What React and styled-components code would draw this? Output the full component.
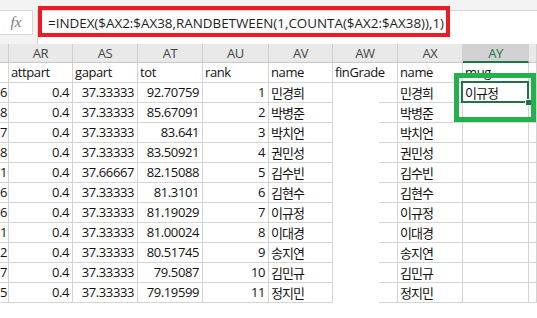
import React from "react"
import styled, { createGlobalStyle } from "styled-components"

const GlobalStyle = createGlobalStyle`
  html, body {
    margin: 0;
    padding: 0;
    background: #fff;
  }
  body {
    overflow: hidden;
  }
`

const names = ["민경희", "박병준", "박치언", "권민성", "김수빈", "김현수", "이규정", "이대경", "송지연", "김민규", "정지민"]
const tots = ["92.70759", "85.67091", "83.641", "83.50921", "82.15088", "81.3101", "81.19029", "81.00024", "80.51745", "79.5087", "79.19599"]
const tails = ["6", "8", "7", "8", "1", "6", "6", "1", "2", "7", "5"]

const rows = names.map((name, i) => ({
  tail: tails[i],
  att: "0.4",
  ga: i === 4 ? "37.66667" : "37.33333",
  tot: tots[i],
  rank: String(i + 1),
  name,
  mug: i === 0 ? "이규정" : "",
}))

const letters = ["", "AR", "AS", "AT", "AU", "AV", "AW", "AX", "AY", ""]

const Page = styled.div`
  position: relative;
  width: 537px;
  height: 318px;
  overflow: hidden;
  font-family: "Open Sans", "Noto Sans CJK KR", sans-serif;
  background: #fff;
`
const FormulaBar = styled.div`
  display: flex;
  align-items: flex-start;
  height: 44px;
  box-sizing: border-box;
  padding-top: 10px;
  background: #f3f3f3;
`
const FxButton = styled.div`
  width: 33px;
  height: 25px;
  box-sizing: border-box;
  border: 1px solid #d9d9d9;
  border-left: none;
  background: #fff;
  display: flex;
  align-items: center;
  justify-content: center;
  font: italic 15px "Liberation Serif", serif;
  color: #7b7b7b;
`
const FormulaInput = styled.div`
  flex: 1;
  height: 34px;
  margin-left: 4px;
  box-sizing: border-box;
  padding-left: 10px;
  background: #fff;
  border-top: 1px solid #d4d4d4;
  border-left: 1px solid #d4d4d4;
  font-size: 13.4px;
  line-height: 24px;
  color: #1e1e1e;
  white-space: nowrap;
`
const Sheet = styled.div`
  display: grid;
  grid-template-columns: 9px 64px 65px 65px 66px 64px 65px 65px 66px 1fr;
  grid-template-rows: 19px repeat(12, 20px);
`
const HeadCell = styled.div`
  box-sizing: border-box;
  border-right: 1px solid #d0d0d0;
  border-bottom: ${(p) => (p.$active ? "2px solid #217346" : "1px solid #c8c8c8")};
  background: ${(p) => (p.$active ? "#d2d2d2" : "#e9e9e9")};
  color: ${(p) => (p.$active ? "#217346" : "#444")};
  font-size: 13px;
  letter-spacing: -0.45px;
  line-height: 18px;
  text-align: center;
  overflow: hidden;
`
const Cell = styled.div`
  box-sizing: border-box;
  border-right: 1px solid #d4d4d4;
  border-bottom: 1px solid #d4d4d4;
  padding: ${(p) => (p.$right ? "0 3px 0 0" : "0 0 0 2px")};
  font-family: ${(p) => (p.$kor ? '"Noto Sans CJK KR", sans-serif' : '"Open Sans", sans-serif')};
  font-size: 13px;
  letter-spacing: ${(p) => (p.$kor ? "-1px" : "-0.4px")};
  line-height: 19px;
  color: #111;
  text-align: ${(p) => (p.$right ? "right" : "left")};
  white-space: nowrap;
  overflow: hidden;
`
const GapCell = styled(Cell)`
  border-bottom: none;
  background: linear-gradient(#d4d4d4, #d4d4d4) right bottom / 18px 1px no-repeat;
`
const RedMark = styled.div`
  position: absolute;
  left: 38px;
  top: 6px;
  width: 412px;
  height: 31px;
  box-sizing: border-box;
  border: 4px solid #ed1c24;
`
const Selection = styled.div`
  position: absolute;
  left: 461px;
  top: 81px;
  width: 68px;
  height: 22px;
  box-sizing: border-box;
  border: 2px solid #217346;

  &::after {
    content: "";
    position: absolute;
    right: -5px;
    bottom: -5px;
    width: 5px;
    height: 5px;
    background: #217346;
    border: 1px solid #fff;
  }
`
const GreenMark = styled.div`
  position: absolute;
  left: 454px;
  top: 73px;
  width: 82px;
  height: 49px;
  box-sizing: border-box;
  border: 5px solid #22b14c;
`

const App = () => {
  return (
    <Page>
      <GlobalStyle />
      <FormulaBar>
        <FxButton>fx</FxButton>
        <FormulaInput>=INDEX($AX2:$AX38,RANDBETWEEN(1,COUNTA($AX2:$AX38)),1)</FormulaInput>
      </FormulaBar>
      <Sheet>
        {letters.map((l, i) => (
          <HeadCell key={"h" + i} $active={l === "AY"}>
            {l}
          </HeadCell>
        ))}

        <Cell />
        <Cell>attpart</Cell>
        <Cell>gapart</Cell>
        <Cell>tot</Cell>
        <Cell>rank</Cell>
        <Cell>name</Cell>
        <Cell>finGrade</Cell>
        <Cell>name</Cell>
        <Cell>mug</Cell>
        <Cell />

        {rows.map((r, i) => (
          <React.Fragment key={i}>
            <Cell $right>{r.tail}</Cell>
            <Cell $right>{r.att}</Cell>
            <Cell $right>{r.ga}</Cell>
            <Cell $right>{r.tot}</Cell>
            <Cell $right>{r.rank}</Cell>
            <Cell $kor>{r.name}</Cell>
            <GapCell />
            <Cell $kor>{r.name}</Cell>
            <Cell $kor>{r.mug}</Cell>
            <Cell />
          </React.Fragment>
        ))}
      </Sheet>
      <RedMark />
      <Selection />
      <GreenMark />
    </Page>
  )
}

export default App
